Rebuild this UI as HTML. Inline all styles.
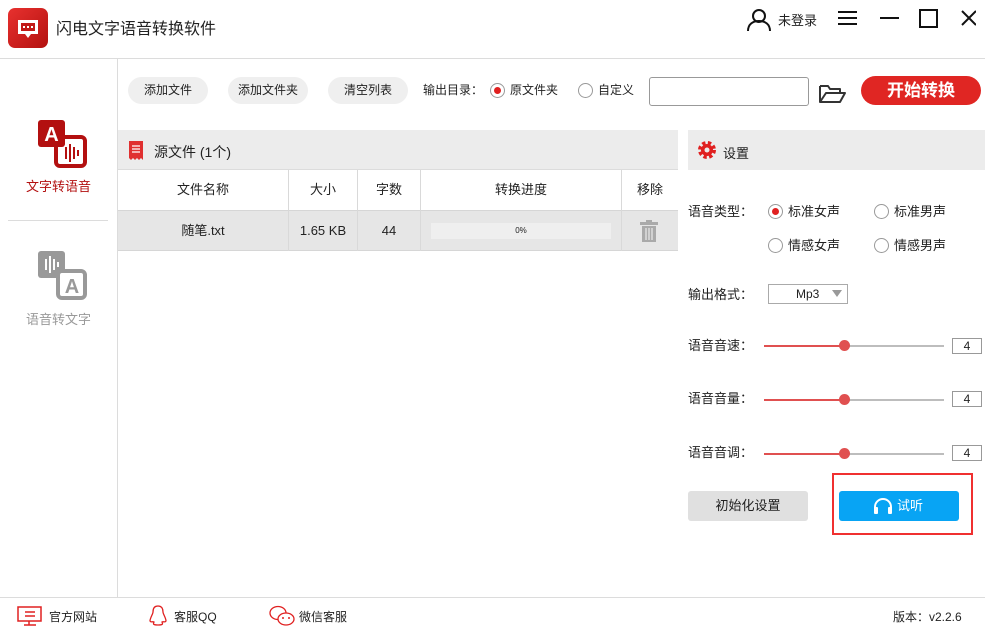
<!DOCTYPE html>
<html><head><meta charset="utf-8"><style>
*{margin:0;padding:0;box-sizing:border-box}
body{width:985px;height:634px;background:#fff;font-family:"Liberation Sans","Noto Sans CJK SC",sans-serif;font-size:13px;color:#222;position:relative;overflow:hidden}
.a{position:absolute}
.btn{position:absolute;top:77px;height:27px;background:#efefef;border-radius:14px;text-align:center;line-height:27px;font-size:12px}
.radio{position:absolute;width:15px;height:15px;border:1px solid #999;border-radius:50%;background:#fff}
.radio.on::after{content:"";position:absolute;left:3px;top:3px;width:7px;height:7px;border-radius:50%;background:#e02020}
.lbl{position:absolute;font-size:13px;line-height:16px}
.th{position:absolute;top:170px;height:40px;line-height:40px;text-align:center;font-size:13px}
.td{position:absolute;top:210px;height:41px;line-height:41px;text-align:center;font-size:13px}
.vl{position:absolute;width:1px;background:#d9d9d9}
.slider{position:absolute;left:764px;width:180px;height:2px;background:#bdbdbd}
.slider i{position:absolute;left:0;top:0;width:80px;height:2px;background:#e05050}
.slider b{position:absolute;left:75px;top:-5px;width:11px;height:11px;border-radius:50%;background:#e05050}
.num{position:absolute;left:952px;width:30px;height:16px;border:1px solid #999;text-align:center;font-size:12px;line-height:14px}
</style></head><body>
<!-- title -->
<div class="a" style="left:8px;top:8px;width:40px;height:40px;border-radius:7px;background:linear-gradient(135deg,#e8312f,#b3110f)"></div>
<svg class="a" style="left:8px;top:8px" width="40" height="40"><path d="M10 12h20v14h-7l-3 4-3-4h-7z" fill="#fff"/><rect x="13" y="15" width="14" height="8" fill="#c21a18"/><rect x="15" y="18" width="2" height="2" fill="#fff"/><rect x="19" y="18" width="2" height="2" fill="#fff"/><rect x="23" y="18" width="2" height="2" fill="#fff"/></svg>
<div class="a" style="left:56px;top:15px;font-size:16px">闪电文字语音转换软件</div>
<svg class="a" style="left:745px;top:7px" width="28" height="24"><circle cx="14" cy="9" r="6" fill="none" stroke="#111" stroke-width="2"/><path d="M3 24c0-7 5-10 11-10s11 3 11 10" fill="none" stroke="#111" stroke-width="2"/></svg>
<div class="a" style="left:778px;top:10px;font-size:13px">未登录</div>
<svg class="a" style="left:836px;top:8px" width="140" height="22"><path d="M2 4h19M2 10h19M2 16h19" stroke="#111" stroke-width="2"/><path d="M44 10h19" stroke="#111" stroke-width="2"/><rect x="84" y="2" width="17" height="17" fill="none" stroke="#111" stroke-width="2"/><path d="M126 3l14 14M140 3l-14 14" stroke="#111" stroke-width="2"/></svg>
<div class="a" style="left:0;top:58px;width:985px;height:1px;background:#dcdcdc"></div>
<!-- sidebar -->
<div class="a" style="left:117px;top:59px;width:1px;height:538px;background:#dcdcdc"></div>
<svg class="a" style="left:37px;top:119px" width="50" height="50"><rect x="19" y="18" width="29" height="29" rx="4" fill="none" stroke="#b31010" stroke-width="4"/><rect x="1" y="1" width="27" height="27" rx="3" fill="#b31010"/><text x="14.5" y="22" text-anchor="middle" font-family="Liberation Sans" font-weight="bold" font-size="20" fill="#fff">A</text><path d="M29 28v12M33 25v18M37 28v12M41 31v6" stroke="#b31010" stroke-width="2"/></svg>
<div class="a" style="left:26px;top:176px;color:#b31010;font-size:13px">文字转语音</div>
<div class="a" style="left:8px;top:220px;width:100px;height:1px;background:#dcdcdc"></div>
<svg class="a" style="left:37px;top:250px" width="50" height="50"><rect x="1" y="1" width="27" height="27" rx="3" fill="#999"/><path d="M9 9v11M13 6v17M17 9v11M21 12v5" stroke="#fff" stroke-width="2"/><rect x="21" y="21" width="27" height="27" rx="4" fill="#fff" stroke="#999" stroke-width="4"/><text x="35" y="43" text-anchor="middle" font-family="Liberation Sans" font-weight="bold" font-size="20" fill="#999">A</text></svg>
<div class="a" style="left:26px;top:309px;color:#999;font-size:13px">语音转文字</div>
<!-- toolbar -->
<div class="btn" style="left:128px;width:80px">添加文件</div>
<div class="btn" style="left:228px;width:80px">添加文件夹</div>
<div class="btn" style="left:328px;width:80px">清空列表</div>
<div class="lbl" style="left:423px;top:82px;font-size:12px">输出目录：</div>
<div class="radio on" style="left:490px;top:83px"></div>
<div class="lbl" style="left:510px;top:82px;font-size:12px">原文件夹</div>
<div class="radio" style="left:578px;top:83px"></div>
<div class="lbl" style="left:598px;top:82px;font-size:12px">自定义</div>
<div class="a" style="left:649px;top:77px;width:160px;height:29px;border:1px solid #999;border-radius:3px"></div>
<svg class="a" style="left:818px;top:82px" width="30" height="22"><path d="M2 4h8l2 3h10v4M2 4v16h20l5-9H8l-6 9" fill="none" stroke="#333" stroke-width="2" stroke-linejoin="round"/></svg>
<div class="a" style="left:861px;top:76px;width:120px;height:29px;border-radius:15px;background:#e02623;color:#fff;text-align:center;line-height:29px;font-size:17px;font-weight:bold">开始转换</div>
<!-- file table -->
<div class="a" style="left:118px;top:130px;width:560px;height:40px;background:#ececec"></div>
<svg class="a" style="left:128px;top:140px" width="16" height="21"><path d="M1 1h14v19l-2-2-2 2-2-2-2 2-2-2-2 2-2-2z" fill="#e03030"/><path d="M4 6h8M4 9h8M4 12h8" stroke="#fff" stroke-width="1.3"/></svg>
<div class="a" style="left:154px;top:142px;font-size:14px">源文件 (1个)</div>
<div class="a" style="left:118px;top:169px;width:560px;height:1px;background:#dcdcdc"></div>
<div class="a" style="left:118px;top:210px;width:560px;height:41px;background:#e6e6e6;border-top:1px solid #d6d6d6;border-bottom:1px solid #d6d6d6"></div>
<div class="vl" style="left:288px;top:170px;height:81px"></div>
<div class="vl" style="left:357px;top:170px;height:81px"></div>
<div class="vl" style="left:420px;top:170px;height:81px"></div>
<div class="vl" style="left:621px;top:170px;height:81px"></div>
<div class="th" style="left:118px;width:170px">文件名称</div>
<div class="th" style="left:289px;width:68px">大小</div>
<div class="th" style="left:358px;width:62px">字数</div>
<div class="th" style="left:421px;width:200px">转换进度</div>
<div class="th" style="left:622px;width:56px">移除</div>
<div class="td" style="left:118px;width:170px">随笔.txt</div>
<div class="td" style="left:289px;width:68px">1.65 KB</div>
<div class="td" style="left:358px;width:62px">44</div>
<div class="a" style="left:431px;top:223px;width:180px;height:16px;background:#efefef;text-align:center;font-size:8px;line-height:16px">0%</div>
<svg class="a" style="left:639px;top:220px" width="20" height="22"><rect x="1" y="2" width="18" height="3" fill="#aaa"/><rect x="7" y="0" width="6" height="3" fill="#aaa"/><path d="M3 6h14v16H3z" fill="#aaa"/><path d="M7 8v12M10 8v12M13 8v12" stroke="#e6e6e6" stroke-width="1.3"/></svg>
<!-- settings -->
<div class="a" style="left:688px;top:130px;width:297px;height:40px;background:#ececec"></div>
<svg class="a" style="left:697px;top:140px" width="20" height="20"><circle cx="10" cy="10" r="6.5" fill="none" stroke="#e02020" stroke-width="5" stroke-dasharray="3 2.2"/><circle cx="10" cy="10" r="6" fill="#e02020"/><circle cx="10" cy="10" r="2.5" fill="#ececec"/></svg>
<div class="a" style="left:723px;top:143px">设置</div>
<div class="lbl" style="left:688px;top:204px">语音类型：</div>
<div class="radio on" style="left:768px;top:204px"></div><div class="lbl" style="left:788px;top:204px">标准女声</div>
<div class="radio" style="left:874px;top:204px"></div><div class="lbl" style="left:894px;top:204px">标准男声</div>
<div class="radio" style="left:768px;top:238px"></div><div class="lbl" style="left:788px;top:238px">情感女声</div>
<div class="radio" style="left:874px;top:238px"></div><div class="lbl" style="left:894px;top:238px">情感男声</div>
<div class="lbl" style="left:688px;top:287px">输出格式：</div>
<div class="a" style="left:768px;top:284px;width:80px;height:20px;border:1px solid #aaa;font-size:12px;line-height:18px;padding-left:27px">Mp3</div>
<svg class="a" style="left:832px;top:290px" width="10" height="8"><path d="M0 0h10L5 7z" fill="#999"/></svg>
<div class="lbl" style="left:688px;top:338px">语音音速：</div>
<div class="slider" style="top:345px"><i></i><b></b></div><div class="num" style="top:338px">4</div>
<div class="lbl" style="left:688px;top:391px">语音音量：</div>
<div class="slider" style="top:399px"><i></i><b></b></div><div class="num" style="top:391px">4</div>
<div class="lbl" style="left:688px;top:445px">语音音调：</div>
<div class="slider" style="top:453px"><i></i><b></b></div><div class="num" style="top:445px">4</div>
<div class="a" style="left:688px;top:491px;width:120px;height:30px;background:#e0e0e0;border-radius:3px;text-align:center;line-height:30px">初始化设置</div>
<div class="a" style="left:832px;top:473px;width:141px;height:62px;border:2px solid #f03030"></div>
<div class="a" style="left:839px;top:491px;width:120px;height:30px;background:#08a4f4;border-radius:3px;color:#fff;line-height:30px;padding-left:58px">试听</div>
<svg class="a" style="left:872px;top:496px" width="22" height="20"><path d="M3 17v-6a8 8 0 0 1 16 0v6" fill="none" stroke="#fff" stroke-width="2"/><rect x="2" y="11" width="4" height="7" rx="1" fill="#fff"/><rect x="16" y="11" width="4" height="7" rx="1" fill="#fff"/></svg>
<!-- footer -->
<div class="a" style="left:0;top:597px;width:985px;height:1px;background:#dcdcdc"></div>
<svg class="a" style="left:17px;top:605px" width="26" height="22"><rect x="1" y="2" width="23" height="14" fill="none" stroke="#e02020" stroke-width="1.5"/><path d="M8 7h10M8 11h10M12 16v4M7 20h12" stroke="#e02020" stroke-width="1.5"/></svg>
<div class="a" style="left:49px;top:608px;font-size:12px">官方网站</div>
<svg class="a" style="left:148px;top:604px" width="20" height="24"><path d="M10 2c-4 0-5 3-5 6 0 2-3 6-3 9 1 2 3 0 4 1-1 2-1 3 4 3s5-1 4-3c1-1 3 1 4-1 0-3-3-7-3-9 0-3-1-6-5-6z" fill="none" stroke="#e02020" stroke-width="1.3"/></svg>
<div class="a" style="left:174px;top:608px;font-size:12px">客服QQ</div>
<svg class="a" style="left:268px;top:604px" width="28" height="24"><ellipse cx="10" cy="9" rx="8" ry="6.5" fill="none" stroke="#e02020" stroke-width="1.3"/><ellipse cx="18" cy="15" rx="8" ry="6" fill="#fff" stroke="#e02020" stroke-width="1.3"/><circle cx="15" cy="14" r="1" fill="#e02020"/><circle cx="21" cy="14" r="1" fill="#e02020"/></svg>
<div class="a" style="left:299px;top:608px;font-size:12px">微信客服</div>
<div class="a" style="left:893px;top:608px;font-size:12px">版本：v2.2.6</div>
</body></html>
